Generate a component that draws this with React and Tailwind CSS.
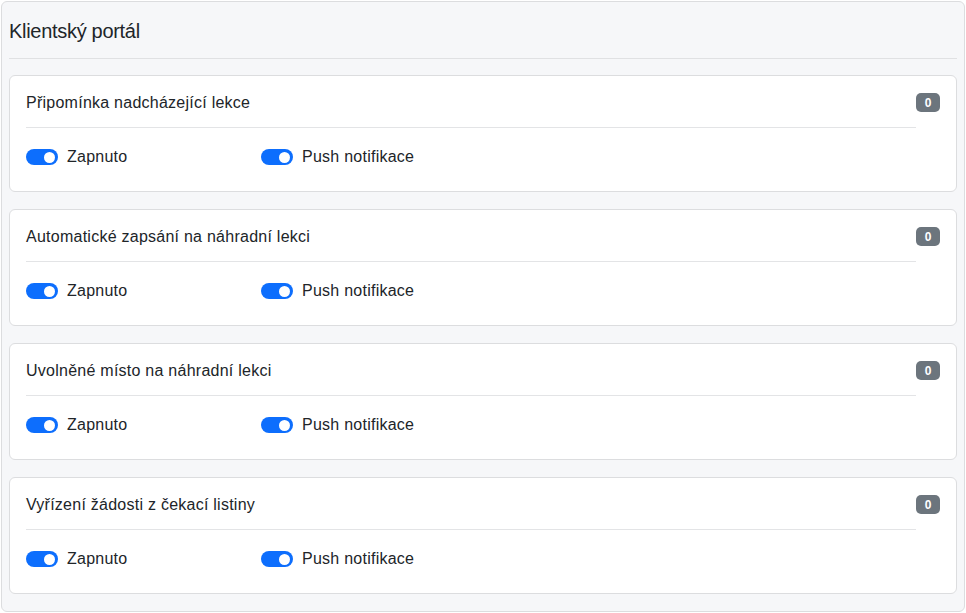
import React from "react";

const items = [
  "Připomínka nadcházející lekce",
  "Automatické zapsání na náhradní lekci",
  "Uvolněné místo na náhradní lekci",
  "Vyřízení žádosti z čekací listiny",
];

function Switch({ label }) {
  return (
    <label className="flex items-center gap-[9px]">
      <span className="relative flex h-[16px] w-[32px] items-center rounded-full bg-[#0d6efd]">
        <span className="absolute right-[3px] h-[11px] w-[11px] rounded-full bg-white" />
      </span>
      <span className="text-[16px] leading-[24px] tracking-[0.25px] text-[#212529]">{label}</span>
    </label>
  );
}

function NotificationCard({ title }) {
  return (
    <div className="flex rounded-[6px] border border-[#dcdddf] bg-white pl-4 pr-4 pt-4 pb-[22px]">
      <div className="flex flex-1 flex-col">
        <div className="text-[16px] leading-[22px] tracking-[0.25px] text-[#212529]">{title}</div>
        <div className="mt-[13px] h-px bg-[#e3e4e6]" />
        <div className="mt-[17px] flex">
          <div className="w-[235px]">
            <Switch label="Zapnuto" />
          </div>
          <Switch label="Push notifikace" />
        </div>
      </div>
      <div className="pt-[1px]">
        <span className="flex h-[19px] w-[24px] items-center justify-center rounded-[5px] bg-[#6c757d] text-[12px] font-bold leading-none text-white">
          0
        </span>
      </div>
    </div>
  );
}

export default function App() {
  return (
    <div
      className="p-px"
      style={{ fontFamily: "'Liberation Sans', Arial, sans-serif" }}
    >
      <div className="rounded-[6px] border border-[#dcdddf] bg-[#f6f7f9] px-[7px] pb-[17px]">
        <div className="pt-[14px] pb-[12px]">
          <h1 className="text-[20px] leading-[30px] tracking-[-0.3px] font-normal text-[#212529]">Klientský portál</h1>
        </div>
        <div className="h-px bg-[#e0e1e3]" />
        <div className="mt-4 flex flex-col gap-[17px]">
          {items.map((t) => (
            <NotificationCard key={t} title={t} />
          ))}
        </div>
      </div>
    </div>
  );
}
